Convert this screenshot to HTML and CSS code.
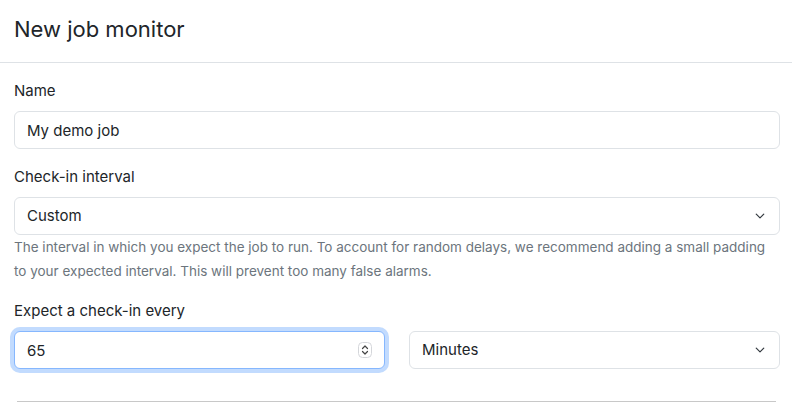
FILE: index.html
```html
<!DOCTYPE html>
<html lang="en">

<head>
  <meta charset="UTF-8" />
  <meta name="viewport" content="width=device-width, initial-scale=1.0" />
  <title>New job monitor</title>
  <link rel="stylesheet" href="styles.css">
</head>

<body>
  <div class="modal-header">
    <h5 class="modal-title">New job monitor</h5>
  </div>

  <div class="modal-body">
    <div class="field">
      <label for="name">Name</label>
      <input type="text" id="name" class="form-control" value="My demo job" />
    </div>

    <div class="field">
      <label for="interval">Check-in interval</label>
      <div class="select-wrap">
        <select id="interval" class="form-select">
          <option>Custom</option>
        </select>
        <svg class="chevron" viewBox="0 0 16 16" width="16" height="12" aria-hidden="true">
          <path d="M3 5.5l5 5 5-5" fill="none" stroke="#343a40" stroke-width="1.6" stroke-linecap="round" stroke-linejoin="round" />
        </svg>
      </div>
      <div class="form-text">
        The interval in which you expect the job to run. To account for random delays, we recommend adding a small padding
        to your expected interval. This will prevent too many false alarms.
      </div>
    </div>

    <div class="field">
      <label for="every">Expect a check-in every</label>
      <div class="row">
        <div class="number-wrap">
          <input type="number" id="every" class="form-control focused" value="65" />
          <svg class="stepper" viewBox="0 0 14 16" width="14" height="16" aria-hidden="true">
            <rect x="0.5" y="0.5" width="13" height="15" rx="4" fill="#fff" stroke="#d4d6da" />
            <path d="M4.5 6.5l2.5-2.5 2.5 2.5M4.5 9.5l2.5 2.5 2.5-2.5" fill="none" stroke="#444" stroke-width="1.2" stroke-linecap="round" stroke-linejoin="round" />
          </svg>
        </div>
        <div class="select-wrap">
          <select class="form-select">
            <option>Minutes</option>
          </select>
          <svg class="chevron" viewBox="0 0 16 16" width="16" height="12" aria-hidden="true">
            <path d="M3 5.5l5 5 5-5" fill="none" stroke="#343a40" stroke-width="1.6" stroke-linecap="round" stroke-linejoin="round" />
          </svg>
        </div>
      </div>
    </div>

    <div class="divider"></div>
  </div>
</body>

</html>
```

FILE: styles.css
```css
body {
  margin: 0;
  font-family: Inter, "Noto Sans", sans-serif;
  font-size: 15px;
  line-height: 1.5;
  color: #212529;
  background: #fff;
}

.modal-header {
  padding: 14px 14px 18px;
  border-bottom: 1px solid #dee2e6;
}

.modal-title {
  margin: 0;
  font-size: 22px;
  font-weight: 400;
  line-height: 30px;
}

.modal-body {
  padding: 16px 12px 0 14px;
}

.field {
  margin-bottom: 16px;
}

.field label {
  display: block;
  margin-bottom: 8px;
  line-height: 24px;
}

.form-control,
.form-select {
  display: block;
  width: 100%;
  box-sizing: border-box;
  height: 38px;
  padding: 6px 12px;
  font-family: inherit;
  font-size: 15px;
  line-height: 24px;
  color: #212529;
  background: #fff;
  border: 1px solid #dee2e6;
  border-radius: 6px;
  outline: none;
}

.form-select {
  appearance: none;
  -webkit-appearance: none;
  padding-right: 36px;
}

.form-control.focused {
  border-color: #86b7fe;
  box-shadow: 0 0 0 4px rgba(13, 110, 253, 0.25);
}

input[type="number"]::-webkit-inner-spin-button,
input[type="number"]::-webkit-outer-spin-button {
  -webkit-appearance: none;
  margin: 0;
}

.select-wrap,
.number-wrap {
  position: relative;
}

.chevron {
  position: absolute;
  right: 12px;
  top: 13px;
  pointer-events: none;
}

.stepper {
  position: absolute;
  right: 13px;
  top: 11px;
  pointer-events: none;
}

.form-text {
  font-size: 13.5px;
  line-height: 24px;
  color: #6c757d;
}

.row {
  display: grid;
  grid-template-columns: 1fr 1fr;
  gap: 24px;
}

.divider {
  margin: 32px 4px 0 3px;
  border-top: 1px solid #c8c8c8;
}
```
